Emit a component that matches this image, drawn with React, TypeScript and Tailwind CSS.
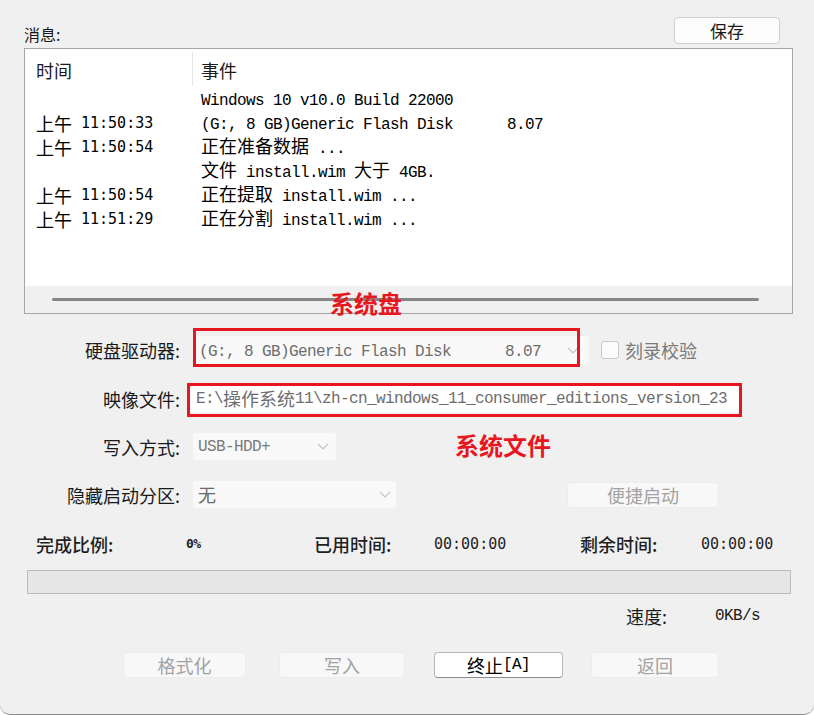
import React from 'react';

const CJK = /([\u3400-\u9fff]+)/;

// SimSun-like run: CJK at full width, ASCII at half width
function Mixed({ text }: { text: string }) {
  const parts = text.split(CJK);
  return (
    <>
      {parts.map((p, i) =>
        CJK.test(p) ? (
          <span key={i} className="font-['Noto_Sans_CJK_SC',sans-serif] text-[18px]">
            {p}
          </span>
        ) : (
          <span key={i} className="font-['Liberation_Mono',monospace] text-[16px] tracking-[-0.6px]">
            {p}
          </span>
        )
      )}
    </>
  );
}

function Chevron() {
  return (
    <svg width="12" height="7" viewBox="0 0 12 7" fill="none">
      <path d="M1 1l5 5 5-5" stroke="#c4c4c4" strokeWidth="1.2" />
    </svg>
  );
}

const rows = [
  { time: '', event: 'Windows 10 v10.0 Build 22000' },
  { time: '11:50:33', event: '(G:, 8 GB)Generic Flash Disk      8.07' },
  { time: '11:50:54', event: '正在准备数据 ...' },
  { time: '', event: '文件 install.wim 大于 4GB.' },
  { time: '11:50:54', event: '正在提取 install.wim ...' },
  { time: '11:51:29', event: '正在分割 install.wim ...' },
];

function FormLabel({ children }: { children: React.ReactNode }) {
  return <div className="w-[180px] text-right text-[18px] leading-[24px] text-[#1a1a1a]">{children}</div>;
}

function DisabledButton({ label, width }: { label: string; width: string }) {
  return (
    <div className={`${width} h-[26px] flex items-center justify-center rounded-[4px] bg-[#f8f8f8] border border-[#ececec] text-[18px] leading-[24px] text-[#a3a3a3]`}>
      {label}
    </div>
  );
}

export default function App() {
  return (
    <div className="relative w-[814px] h-[715px] overflow-hidden bg-[#f0f0f0] rounded-b-[10px] border-b border-[#8a8a8a] font-['Noto_Sans_CJK_SC',sans-serif] text-[#1a1a1a]">
      {/* Message header + save */}
      <div className="pl-[24px] pr-[21px] pt-[17px]">
        <div className="flex items-start justify-between">
          <div className="mt-[7px] text-[16px] leading-[20px]">消息:</div>
          <div className="mr-[13px] w-[106px] h-[27px] flex items-center justify-center rounded-[4px] bg-[#fdfdfd] border border-[#cfcfcf] text-[17px] leading-[22px]">
            保存
          </div>
        </div>

        {/* Message list */}
        <div className="mt-[4px] h-[266px] flex flex-col bg-white border border-[#a6a6a6]">
          <div className="flex h-[38px]">
            <div className="w-[167px] pl-[11px] pt-[4px] flex items-center text-[18px]">时间</div>
            <div className="w-px h-[34px] mt-[3px] bg-[#e6e6e6]" />
            <div className="pl-[8px] pt-[4px] flex items-center text-[18px]">事件</div>
          </div>
          {rows.map((r, i) => (
            <div key={i} className="flex h-[24px] items-center whitespace-pre text-black">
              <div className="w-[168px] pl-[11px] flex items-center">
                {r.time && (
                  <>
                    <span className="text-[18px]">上午</span>
                    <span className="ml-[9px] font-['DejaVu_Sans_Mono',monospace] text-[15px]">{r.time}</span>
                  </>
                )}
              </div>
              <div className="pl-[8px] leading-[24px]">
                <Mixed text={r.event} />
              </div>
            </div>
          ))}
          <div className="flex-1" />
          <div className="h-[27px] bg-[#f0f0f0] flex items-center pl-[27px]">
            <div className="w-[707px] h-[3px] rounded-full bg-[#868686]" />
          </div>
        </div>
      </div>

      {/* Form */}
      <div className="mt-[22px] flex flex-col gap-[21px]">
        <div className="flex items-center h-[28px]">
          <FormLabel>硬盘驱动器:</FormLabel>
          <div className="ml-[13px] w-[396px] h-[28px] flex items-center justify-between pl-[6px] pr-[10px] bg-[#f9f9f9] rounded-[3px] whitespace-pre text-[#6d6d6d]">
            <span>
              <Mixed text="(G:, 8 GB)Generic Flash Disk      8.07" />
            </span>
            <Chevron />
          </div>
          <div className="ml-[12px] w-[18px] h-[18px] rounded-[3px] border border-[#c9c9c9] bg-[#fbfbfb]" />
          <div className="ml-[6px] text-[18px] leading-[24px] text-[#7a7a7a]">刻录校验</div>
        </div>

        <div className="flex items-center h-[27px]">
          <FormLabel>映像文件:</FormLabel>
          <div className="ml-[10px] w-[549px] h-[27px] flex items-center pl-[6px] bg-white overflow-hidden whitespace-pre text-[#6d6d6d]">
            <Mixed text={'E:\\操作系统11\\zh-cn_windows_11_consumer_editions_version_23'} />
          </div>
        </div>

        <div className="flex items-center h-[27px]">
          <FormLabel>写入方式:</FormLabel>
          <div className="ml-[13px] w-[143px] h-[27px] flex items-center justify-between pl-[5px] pr-[7px] bg-[#f9f9f9] rounded-[3px] text-[#7a7a7a]">
            <span className="font-['Liberation_Mono',monospace] text-[16px] tracking-[-0.6px]">USB-HDD+</span>
            <Chevron />
          </div>
        </div>

        <div className="flex items-center h-[27px]">
          <FormLabel>隐藏启动分区:</FormLabel>
          <div className="ml-[13px] w-[203px] h-[27px] flex items-center justify-between pl-[5px] pr-[5px] bg-[#f9f9f9] rounded-[3px] text-[18px] text-[#6a6a6a]">
            <span>无</span>
            <Chevron />
          </div>
          <div className="ml-[171px]">
            <DisabledButton label="便捷启动" width="w-[152px]" />
          </div>
        </div>
      </div>

      {/* Progress stats */}
      <div className="mt-[24px] h-[24px] flex items-center pl-[36px] font-medium text-[#1f1f1f]">
        <div className="w-[150px] text-[18px]">完成比例:</div>
        <div className="w-[128px] font-['DejaVu_Sans_Mono',monospace] text-[13px] font-bold tracking-[-0.5px]">0%</div>
        <div className="w-[120px] text-[18px]">已用时间:</div>
        <div className="w-[146px] font-['DejaVu_Sans_Mono',monospace] text-[15px] font-normal">00:00:00</div>
        <div className="w-[121px] text-[18px]">剩余时间:</div>
        <div className="font-['DejaVu_Sans_Mono',monospace] text-[15px] font-normal">00:00:00</div>
      </div>

      <div className="mt-[14px] ml-[27px] w-[764px] h-[24px] bg-[#e6e6e6] border border-[#bcbcbc]" />

      <div className="mt-[10px] h-[24px] flex items-center pl-[626px]">
        <div className="w-[89px] text-[18px]">速度:</div>
        <div className="font-['Liberation_Mono',monospace] text-[16px] tracking-[-0.6px]">0KB/s</div>
      </div>

      {/* Bottom buttons */}
      <div className="mt-[24px] flex items-center pl-[123px]">
        <DisabledButton label="格式化" width="w-[123px]" />
        <div className="ml-[33px]">
          <DisabledButton label="写入" width="w-[126px]" />
        </div>
        <div className="ml-[29px] w-[129px] h-[26px] flex items-center justify-center rounded-[4px] bg-white border border-[#b8b8b8] border-b-[#8c8c8c] text-black whitespace-pre">
          <Mixed text="终止[A]" />
        </div>
        <div className="ml-[28px]">
          <DisabledButton label="返回" width="w-[128px]" />
        </div>
      </div>

      {/* Red annotations */}
      <div className="absolute left-[330px] top-[288px] text-[24px] leading-[30px] font-bold text-[#e8161f]">系统盘</div>
      <div className="absolute left-[193px] top-[328px] w-[387px] h-[39px] border-[3px] border-[#e8161f]" />
      <div className="absolute left-[187px] top-[383px] w-[555px] h-[34px] border-[3px] border-[#e8161f]" />
      <div className="absolute left-[455px] top-[430px] text-[24px] leading-[30px] font-bold text-[#e8161f]">系统文件</div>
    </div>
  );
}
